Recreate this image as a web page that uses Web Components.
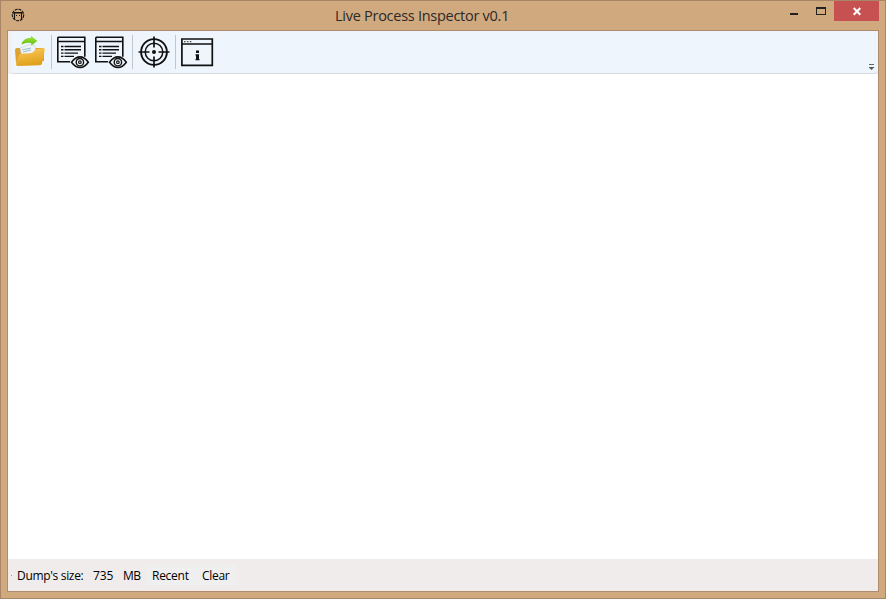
<!DOCTYPE html>
<html lang="en"><head><meta charset="utf-8"><title>Live Process Inspector v0.1</title>
<style>html,body{margin:0;height:100%;overflow:hidden}</style></head><body>
<app-window>
  <title-bar slot="title">Live Process Inspector v0.1</title-bar>
  <tool-bar slot="tools">
    <tool-icon name="open"></tool-icon><tool-separator></tool-separator>
    <tool-icon name="view" style="width:38px"></tool-icon><tool-icon name="view" style="width:42px"></tool-icon><tool-separator></tool-separator>
    <tool-icon name="target" style="width:42px"></tool-icon><tool-separator></tool-separator>
    <tool-icon name="info"></tool-icon>
  </tool-bar>
  <status-bar slot="status">
    <status-item style="width:76px;--ls:-.32px">Dump's size:</status-item><status-item style="width:30px">735</status-item><status-item style="width:23px;--ls:-.5px">MB</status-item><status-item button style="width:44px;--ls:-.26px">Recent</status-item><status-item button style="width:34px;--ls:-.3px">Clear</status-item>
  </status-bar>
</app-window>
<script>
function define(name, html, setup){
  customElements.define(name, class extends HTMLElement{
    constructor(){super();this.attachShadow({mode:'open'}).innerHTML=html;}
    connectedCallback(){if(setup)setup(this);}
  });
}
define('app-window',`<style>
:host{display:grid;grid-template-rows:29px 1fr;box-sizing:border-box;width:886px;height:599px;padding:0 6px 6px;background:#d1a97e;border:1px solid #a78565;font-family:"Open Sans","Noto Sans",sans-serif}
.client{display:grid;grid-template-rows:43px 1fr 32px;border:1px solid #b08c6c;background:#fff;min-height:0}
</style><slot name="title"></slot><div class="client"><slot name="tools"></slot><main></main><slot name="status"></slot></div>`);
define('title-bar',`<style>
:host{display:grid;grid-template-columns:28px 1fr 28px 24px 47px;height:29px;margin-right:0}
.text{font-size:14.5px;line-height:29px;color:#2a2a2a;white-space:nowrap;padding-left:300px;letter-spacing:-.27px}
svg{display:block}.close{background:#c75050;height:20px;width:45px;justify-self:end}
</style>
<svg width="28" height="29"><g fill="none" stroke="#171310" stroke-width="1.1"><circle cx="11" cy="14" r="5.7" stroke-dasharray="3 .8"/><path d="M7.5 18v-6.5h7V18M6 12h10"/><path d="M9 14.5h1M12 14.5h1" stroke-width="1"/></g></svg>
<span class="text"><slot></slot></span>
<svg width="28" height="29"><path d="M10 12h8v2h-8z" fill="#222"/></svg>
<svg width="24" height="29"><path d="M8 6h10v8H8zM9 8v5h8V8z" fill="#222" fill-rule="evenodd"/></svg>
<div class="close"><svg width="45" height="20"><path d="m19.7 7 6.6 6.8m0-6.8-6.6 6.8" stroke="#fff" stroke-width="2"/></svg></div>`);
define('tool-bar',`<style>
:host{display:flex;background:#f0f0f0;height:43px}
.strip{flex:1;display:flex;align-items:center;box-sizing:border-box;margin-left:3px;padding-left:3px;background:#eef5fd;border-bottom:1px solid #d7dade;border-radius:3px 4px 4px 3px}
.more{margin-left:auto;align-self:flex-end;display:block}
</style><div class="strip"><slot></slot><svg class="more" width="14" height="16"><path d="M5 7.5h5" stroke="#666"/><path d="M4.5 10h6l-3 3z" fill="#555"/></svg></div>`);
define('tool-separator',`<style>:host{display:block;width:1px;height:34px;background:#c2c6cb}</style>`);
define('status-bar',`<style>
:host{display:flex;align-items:center;background:#f0eceb;height:32px;padding-left:3px}
i{width:1px;height:1px;background:#999;margin-right:5px}
</style><i></i><slot></slot>`);
define('status-item',`<style>
:host{display:block;box-sizing:border-box;font-size:12px;line-height:18px;padding-top:2px;color:#000;white-space:nowrap;letter-spacing:var(--ls,-.15px)}
:host([button]){background:#efefef;padding:2px 0 0 6px;box-sizing:content-box}
</style><slot></slot>`);
const art={
open:`<defs><linearGradient id="f" x2=".3" y2="1"><stop stop-color="#f8cd68"/><stop offset=".5" stop-color="#efb63c"/><stop offset="1" stop-color="#dfa11c"/></linearGradient><linearGradient id="g" x2="0" y2="1"><stop stop-color="#a5e93c"/><stop offset="1" stop-color="#5dbb12"/></linearGradient></defs>
<path d="M1 16q0-2 2-2h3l3 3 10-3h10l1 2v11H4L2 29z" fill="#e0a22f"/><path d="m6 14 10-3.5 5 1 1 9-14 2z" fill="#eef4f8" stroke="#c2d2de" stroke-width=".6"/><path d="m8 16 9-2M9 18l8-2" stroke="#9dbbd0"/><path d="M7 19.8 18 19l4-4 8-.7q1 0 .8 1.5L28 29.5q-.4 1.7-2 1.7L4 32q-2.3 0-2-2L5 21.2q.4-1.3 2-1.4z" fill="url(#f)"/><path d="M7.5 10.5q2-7 9.5-6.7V1.8l6.3 5.2-6 4.5V9Q12 8 7.5 10.5z" fill="url(#g)"/>`,
view:`<g fill="none" stroke="#111"><path d="M5.8 3.2h27v19.5M5.8 3.2v24.6H18M6 7.5h27" stroke-width="1.6"/><path d="M9 12.5h2.5m1 0H29M9 15.8h2.5m1 0H29M9 19.1h2.5m1 0H26M9 22.4h2.5m1 0H22" stroke-width="1.4"/><path d="M19.5 28.2q4-5.3 8.5-5.3t8.3 5.3q-3.8 5.3-8.3 5.3t-8.5-5.3z" fill="#eef5fd" stroke-width="1.6"/><circle cx="27.9" cy="28.2" r="3.7" stroke-width="1.4"/><circle cx="27.9" cy="28.2" r="1.3" stroke-width="1.2"/></g>`,
target:`<g fill="none" stroke="#111" stroke-width="1.9"><circle cx="21" cy="18" r="12.9"/><circle cx="21" cy="18" r="8.8" stroke-width="1.5"/><path d="M21 2.5v11M21 22.5v11M5.5 18h11M25.5 18h11" stroke-width="1.7"/></g><circle cx="21" cy="18" r="2" fill="#111"/>`,
info:`<path d="M5.9 5h30.4v26.3H5.9zM6 10h30" fill="none" stroke="#111" stroke-width="1.7"/><path d="M8 7.6h1.6m1.3 0h1.6m1.3 0h1.6" stroke="#555" stroke-width="1.3"/><path d="M20 16.5h3V19h-3zM19.5 20.3H23v4.8h.5v1.2h-4v-1.2h.5v-3.6h-.5z" fill="#111"/>`};
define('tool-icon',`<style>:host{display:block;width:37px;height:36px;flex:none}svg{display:block;overflow:visible}</style><svg width="37" height="36"></svg>`,
 el=>{el.shadowRoot.querySelector('svg').innerHTML=art[el.getAttribute('name')];});
</script></body></html>
